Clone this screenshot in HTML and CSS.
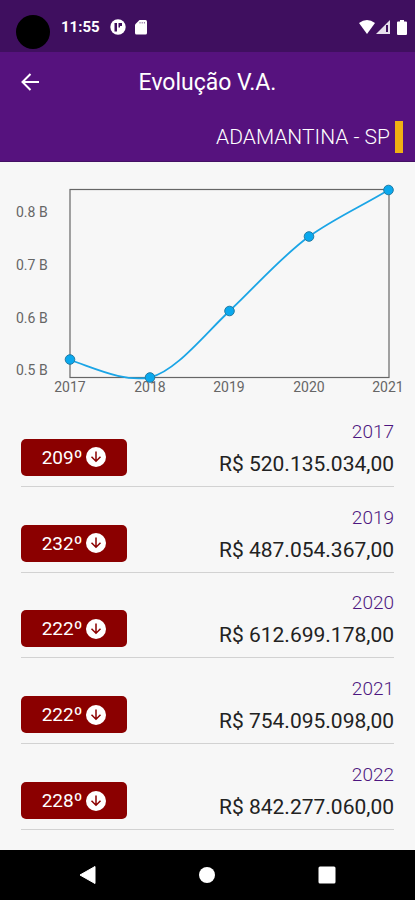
FILE: index.html
```html
<!DOCTYPE html>
<html lang="pt-BR">
<head>
<meta charset="utf-8">
<meta name="viewport" content="width=device-width, initial-scale=1">
<title>Evolução V.A.</title>
<link rel="stylesheet" href="styles.css">
</head>
<body>
<div class="status">
  <span class="camera"></span>
  <span class="clock">11:55</span>
  <svg class="status-app" width="16" height="16" viewBox="0 0 16 16"><circle cx="8" cy="8" r="7.700" fill="#fff"/><path d="M4.500 4h2.500v8.500h-2.500zM8.500 4h3.500v3h-2v1.500h-1.500z" fill="#3e0e5e"/></svg>
  <svg class="status-card" width="12" height="15" viewBox="0 0 12 15"><path d="M4.500 0H10.500Q12 0 12 1.500V13Q12 14.500 10.500 14.500H1.500Q0 14.500 0 13V4.500Z" fill="#fff"/><path d="M5 2v1.500M7.200 2v1.500M9.400 2v1.500" stroke="#8b6d9e" stroke-width="1"/></svg>
  <span class="status-right">
    <svg width="16" height="14" viewBox="0 0 16 14"><path d="M0 3Q8-3 16 3L8 14Z" fill="#fff"/></svg>
    <svg width="14" height="14" viewBox="0 0 14 14"><path d="M14 0V14H0Z" fill="#e6dfeb"/><path d="M10 5h2v7h-2z" fill="#3e0e5e"/></svg>
    <svg class="battery" width="10" height="15" viewBox="0 0 10 15"><path d="M3 0h4v1.500h2q1 0 1 1V14q0 1-1 1H1q-1 0-1-1V2.500q0-1 1-1h2Z" fill="#fff"/></svg>
  </span>
</div>
<header class="header">
  <div class="title-row">
    <button class="back" type="button" aria-label="Voltar"><svg width="18" height="18" viewBox="0 0 18 18"><path d="M18 9H1.500M9.500 1L1.500 9L9.500 17" fill="none" stroke="#fff" stroke-width="2"/></svg></button>
    <h1>Evolução V.A.</h1>
  </div>
  <div class="city"><span>ADAMANTINA - SP</span><span class="city-mark"></span></div>
</header>
<main>
  <svg class="chart" viewBox="0 0 415 239" role="img" aria-label="Evolução V.A.">
    <rect class="frame" x="70" y="27.500" width="319" height="188"/>
    <g class="axis">
      <text x="16" y="55">0.8 B</text>
      <text x="16" y="108">0.7 B</text>
      <text x="16" y="161">0.6 B</text>
      <text x="16" y="213">0.5 B</text>
    </g>
    <g class="axis years">
      <text x="70" y="230">2017</text>
      <text x="150" y="230">2018</text>
      <text x="229" y="230">2019</text>
      <text x="309" y="230">2020</text>
      <text x="388" y="230">2021</text>
    </g>
    <path class="line" d="M70 198C97 207 123 220 150 215.500C176 209 203 174 229.500 149C256 124 282 94 309 74.500C335 56 362 44 388.500 28"/>
    <g class="dots">
      <circle cx="70" cy="197.500" r="4.800"/>
      <circle cx="150" cy="215.500" r="4.800"/>
      <circle cx="229.500" cy="149" r="4.800"/>
      <circle cx="309" cy="74.500" r="4.800"/>
      <circle cx="388.500" cy="28" r="4.800"/>
    </g>
  </svg>
  <ul class="list">
    <li><span class="rank">209º <svg width="20" height="20" viewBox="0 0 20 20"><circle cx="10" cy="10" r="10"/><path d="M10 4.500V14M5.500 9.800L10 14.300L14.500 9.800"/></svg></span><div class="value"><span class="year">2017</span><span>R$ 520.135.034,00</span></div></li>
    <li><span class="rank">232º <svg width="20" height="20" viewBox="0 0 20 20"><circle cx="10" cy="10" r="10"/><path d="M10 4.500V14M5.500 9.800L10 14.300L14.500 9.800"/></svg></span><div class="value"><span class="year">2019</span><span>R$ 487.054.367,00</span></div></li>
    <li><span class="rank">222º <svg width="20" height="20" viewBox="0 0 20 20"><circle cx="10" cy="10" r="10"/><path d="M10 4.500V14M5.500 9.800L10 14.300L14.500 9.800"/></svg></span><div class="value"><span class="year">2020</span><span>R$ 612.699.178,00</span></div></li>
    <li><span class="rank">222º <svg width="20" height="20" viewBox="0 0 20 20"><circle cx="10" cy="10" r="10"/><path d="M10 4.500V14M5.500 9.800L10 14.300L14.500 9.800"/></svg></span><div class="value"><span class="year">2021</span><span>R$ 754.095.098,00</span></div></li>
    <li><span class="rank">228º <svg width="20" height="20" viewBox="0 0 20 20"><circle cx="10" cy="10" r="10"/><path d="M10 4.500V14M5.500 9.800L10 14.300L14.500 9.800"/></svg></span><div class="value"><span class="year">2022</span><span>R$ 842.277.060,00</span></div></li>
  </ul>
</main>
<nav class="nav">
  <button type="button" aria-label="Voltar"><svg width="18" height="18" viewBox="0 0 18 18"><path d="M16 .5V17.500L1 9Z" fill="#fff" stroke="#fff" stroke-linejoin="round"/></svg></button>
  <button type="button" aria-label="Início"><svg width="18" height="18" viewBox="0 0 18 18"><circle cx="9" cy="9" r="8" fill="#fff"/></svg></button>
  <button type="button" aria-label="Recentes"><svg width="18" height="18" viewBox="0 0 18 18"><rect x=".5" y=".5" width="17" height="17" rx="1.500" fill="#fff"/></svg></button>
</nav>
</body>
</html>
```
FILE: styles.css
```css
* { box-sizing: border-box; }
body {
  margin: 0;
  min-height: 100vh;
  display: flex;
  flex-direction: column;
  background: #f7f7f7;
  color: #222;
  font-family: Roboto, "Liberation Sans", sans-serif;
}
svg { display: block; flex: none; }
button { border: 0; padding: 0; background: none; }
.status {
  display: flex;
  align-items: center;
  height: 52px;
  padding: 2px 8px 0 16px;
  background: #3f0f5f;
  color: #fff;
}
.camera {
  width: 34px;
  height: 34px;
  margin-top: 10px;
  border-radius: 50%;
  background: #000;
}
.clock { margin-left: 11px; font-size: 15px; font-weight: 700; }
.status-app { margin-left: 10px; }
.status-card { margin-left: 9px; }
.status-right { display: flex; align-items: center; gap: 1px; margin-left: auto; }
.battery { margin-left: 6px; }
.header { background: #56127e; color: #fff; border-bottom: 1px solid #431064; }
.title-row {
  display: grid;
  grid-template-columns: 39px 1fr 39px;
  align-items: center;
  height: 60px;
}
.back { display: flex; justify-content: flex-end; }
h1 { margin: 0; font-size: 23px; font-weight: 400; text-align: center; }
.city {
  display: flex;
  align-items: center;
  justify-content: flex-end;
  gap: 5px;
  height: 49px;
  padding-right: 12px;
  font-size: 21px;
  font-weight: 300;
}
.city-mark { width: 8px; height: 32px; background: #efb013; }
main { flex: 1; display: flex; flex-direction: column; }
.chart { width: 100%; height: auto; }
.frame { fill: none; stroke: #666; stroke-width: 1.2; }
.axis { font-size: 14px; font-weight: 400; fill: #666; }
.years { text-anchor: middle; }
.line { fill: none; stroke: #1ba5e6; stroke-width: 1.8; }
.dots { fill: #0aa9ee; stroke: #247ba3; stroke-width: 1; }
.list {
  flex: 1;
  display: grid;
  grid-auto-rows: 1fr;
  margin: 0;
  padding: 0 21px 20px;
  list-style: none;
}
.list li {
  display: flex;
  align-items: flex-end;
  justify-content: space-between;
  padding-bottom: 10px;
  border-bottom: 1px solid #d2d2d2;
}
.rank {
  display: flex;
  align-items: center;
  justify-content: center;
  gap: 4px;
  width: 106px;
  height: 37px;
  border-radius: 5px;
  background: #8b0000;
  color: #fff;
  font-size: 19px;
}
.rank circle { fill: #fff; }
.rank path { fill: none; stroke: #8b0000; stroke-width: 1.5; }
.value {
  display: flex;
  flex-direction: column;
  align-items: flex-end;
  font-size: 21px;
  line-height: 24px;
  gap: 8px;
}
.year { color: #4d1680; font-size: 19px; font-weight: 300; }
.nav {
  display: grid;
  grid-template-columns: repeat(3, 1fr);
  align-items: center;
  height: 50px;
  padding: 0 28px;
  background: #000;
}
.nav button { display: flex; justify-content: center; }
```
